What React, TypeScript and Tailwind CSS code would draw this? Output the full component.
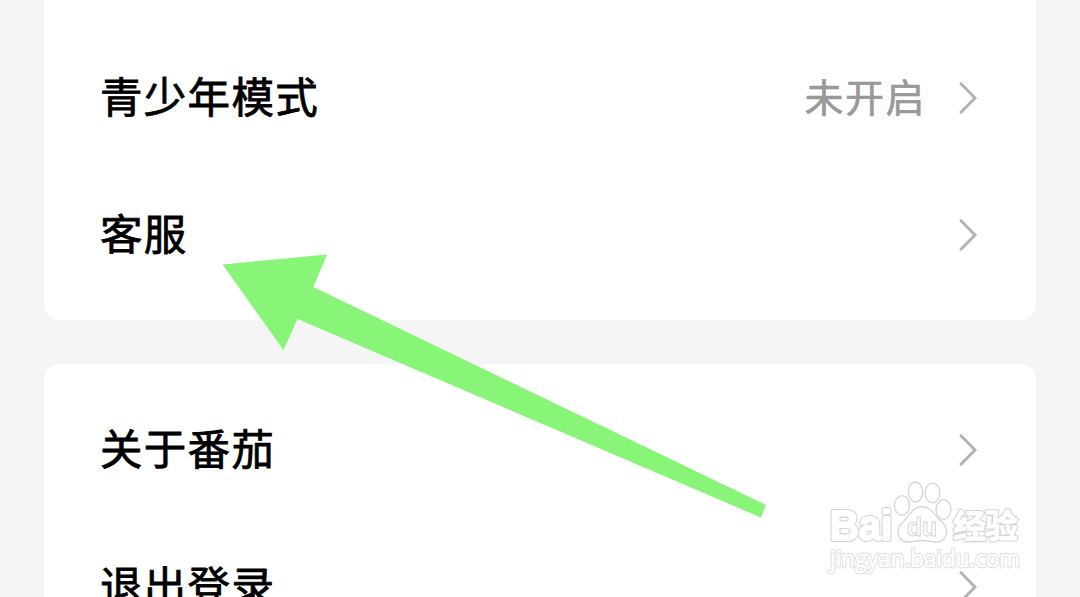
type RowProps = {
  label: string;
  value?: string;
};

function Chevron() {
  return (
    <svg className="h-9 w-6 shrink-0" viewBox="0 0 24 36" fill="none" stroke="#b3b3b3" strokeWidth="3" strokeLinecap="round">
      <path d="M5 3.7 19 18 5 32.3" />
    </svg>
  );
}

function Row({ label, value }: RowProps) {
  return (
    <div className="flex h-[137px] shrink-0 items-center px-[56px]">
      <span className="flex-1 pb-[4px] text-[42.5px] leading-none tracking-[1.3px] text-black [-webkit-text-stroke:0.8px_#000]">{label}</span>
      {value ? (
        <span className="mr-[30px] pb-[4px] text-[39px] leading-none tracking-[1.5px] text-[#999999] [-webkit-text-stroke:0.6px_#999999]">{value}</span>
      ) : null}
      <Chevron />
    </div>
  );
}

function Arrow() {
  return (
    <svg className="absolute top-0 left-0 h-[597px] w-[1080px]" viewBox="0 0 1080 597">
      <polygon points="222.5,264.5 327,254.5 313.5,287 766,505 761,517.5 297.5,319 283.5,350" fill="#88f578" />
    </svg>
  );
}

// Lettering is defined once, then painted as a grey outline with a white face on top
function Watermark() {
  return (
    <svg className="absolute top-[470px] left-[810px] h-[127px] w-[230px]" viewBox="0 0 230 127" fill="#ffffff" strokeLinejoin="round">
      <defs>
        <text id="wm-bai" x="20" y="70" fontSize="42" fontFamily="'Liberation Sans'" fontWeight="bold" textLength="62" lengthAdjust="spacingAndGlyphs">
          Bai
        </text>
        <text id="wm-jy" x="143" y="68" fontSize="33" fontFamily="'Noto Sans CJK SC'" fontWeight="bold" textLength="65">
          经验
        </text>
        <text id="wm-url" x="20" y="97" fontSize="23" fontFamily="'Open Sans', 'Noto Sans'" textLength="190" lengthAdjust="spacingAndGlyphs">
          jingyan.baidu.com
        </text>
      </defs>
      <use href="#wm-bai" stroke="#d4d4d4" strokeWidth="4.2" />
      <use href="#wm-bai" stroke="#ffffff" strokeWidth="2" />
      <use href="#wm-jy" stroke="#d4d4d4" strokeWidth="3" />
      <use href="#wm-jy" stroke="#ffffff" strokeWidth="0.8" />
      <use href="#wm-url" stroke="#dedede" strokeWidth="2.6" />
      <use href="#wm-url" stroke="#ffffff" strokeWidth="0.6" />
      <g stroke="#d6d6d6" strokeWidth="1.3">
        <ellipse cx="92" cy="35.5" rx="7.5" ry="9.8" />
        <ellipse cx="105.5" cy="22" rx="7.2" ry="10" />
        <ellipse cx="122.5" cy="23" rx="7.5" ry="9.8" />
        <ellipse cx="133.5" cy="39.5" rx="7.5" ry="9.8" />
        <path d="M112 36.5C102 36.5 99 47 93 52C84 60 88 72 98 72C104 72 106 70.5 112 70.5C118 70.5 120 72 126 72C137 72 140 60 132 52C125 47 122 36.5 112 36.5Z" />
        <text x="97" y="66" fontSize="26" fontFamily="'Liberation Sans'" fontWeight="bold" strokeWidth="1" textLength="30" lengthAdjust="spacingAndGlyphs">
          du
        </text>
      </g>
    </svg>
  );
}

export default function App() {
  return (
    <main className="relative flex h-[597px] w-[1080px] flex-col gap-[44px] overflow-hidden bg-[#f5f5f5] px-[44px] font-['Noto_Sans_CJK_SC',sans-serif]">
      <section className="h-[320px] shrink-0 rounded-b-[16px] bg-white pt-[29px]">
        <Row label="青少年模式" value="未开启" />
        <Row label="客服" />
      </section>
      <section className="h-[320px] shrink-0 rounded-t-[16px] bg-white pt-[17px]">
        <Row label="关于番茄" />
        <Row label="退出登录" />
      </section>
      <Arrow />
      <Watermark />
    </main>
  );
}
